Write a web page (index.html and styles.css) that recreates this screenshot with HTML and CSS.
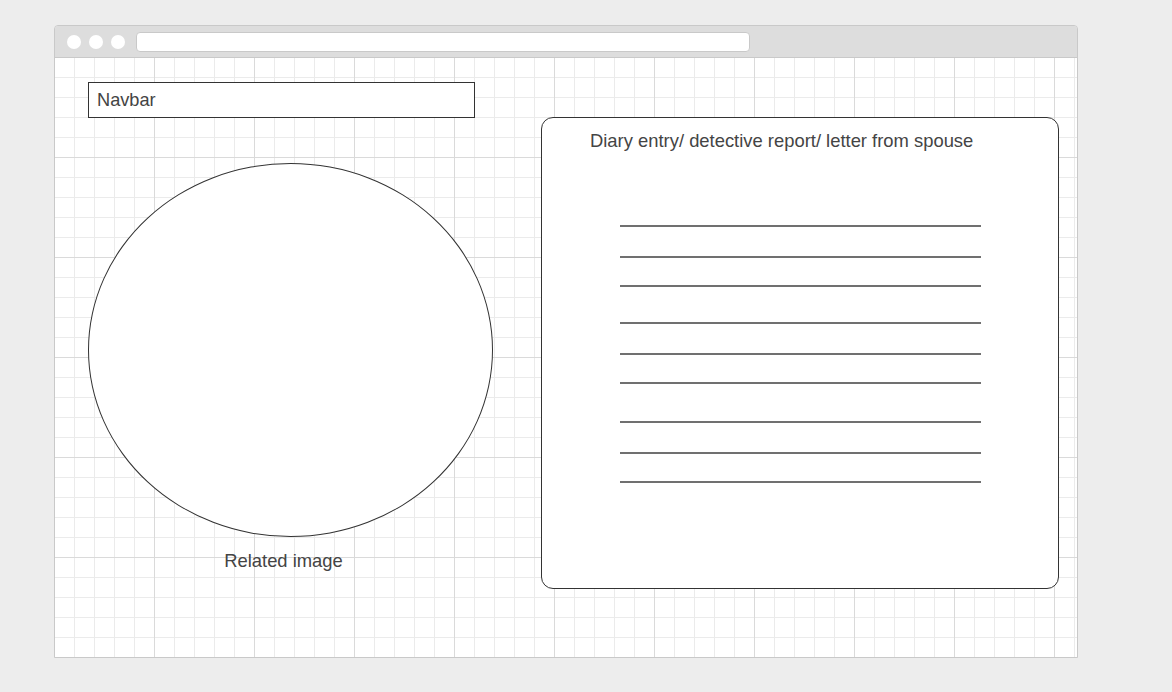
FILE: index.html
```html
<!DOCTYPE html>
<html>
<head>
<meta charset="utf-8">
<title>Wireframe</title>
<link rel="stylesheet" href="styles.css">
</head>
<body>
<div class="window">
  <div class="window-header">
    <span class="dot"></span>
    <span class="dot"></span>
    <span class="dot"></span>
    <div class="url-bar"></div>
  </div>
  <div class="window-content">
    <div class="left-col">
      <div class="navbar">Navbar</div>
      <div class="image-circle"></div>
      <div class="caption">Related image</div>
    </div>
    <div class="card">
      <div class="card-title">Diary entry/ detective report/ letter from spouse</div>
      <div class="lines">
        <div class="line-group">
          <div class="line"></div>
          <div class="line"></div>
          <div class="line"></div>
        </div>
        <div class="line-group">
          <div class="line"></div>
          <div class="line"></div>
          <div class="line"></div>
        </div>
        <div class="line-group">
          <div class="line"></div>
          <div class="line"></div>
          <div class="line"></div>
        </div>
      </div>
    </div>
  </div>
</div>
</body>
</html>
```

FILE: styles.css
```css
html, body {
  margin: 0;
  padding: 0;
}
body {
  background: #ededed;
  font-family: "Liberation Sans", Arial, sans-serif;
  color: #444444;
  padding: 25px 0 0 54px;
  height: 692px;
  box-sizing: border-box;
  overflow: hidden;
}
.window {
  width: 1024px;
  height: 633px;
  box-sizing: border-box;
  border: 1px solid #c9c9c9;
  border-radius: 4px 4px 0 0;
  display: flex;
  flex-direction: column;
  overflow: hidden;
}
.window-header {
  height: 32px;
  box-sizing: border-box;
  background: #dddddd;
  border-bottom: 1px solid #c9c9c9;
  display: flex;
  align-items: center;
  padding-left: 12px;
  gap: 8px;
}
.dot {
  width: 14px;
  height: 14px;
  border-radius: 50%;
  background: #ffffff;
  flex: none;
}
.url-bar {
  margin-left: 3px;
  width: 614px;
  height: 20px;
  box-sizing: border-box;
  background: #ffffff;
  border: 1px solid #c9c9c9;
  border-radius: 4px;
}
.window-content {
  flex: 1;
  display: flex;
  align-items: flex-start;
  padding: 24px 0 0 33px;
  background-color: #ffffff;
  background-image:
    linear-gradient(to right, transparent 99px, #dadada 99px, #dadada 100px),
    linear-gradient(to bottom, transparent 99px, #dadada 99px, #dadada 100px),
    linear-gradient(to right, transparent 19px, #ebebeb 19px, #ebebeb 20px),
    linear-gradient(to bottom, transparent 19px, #ebebeb 19px, #ebebeb 20px);
  background-size: 100px 100px, 100px 100px, 20px 20px, 20px 20px;
}
.left-col {
  width: 405px;
  display: flex;
  flex-direction: column;
  flex: none;
}
.navbar {
  width: 387px;
  height: 36px;
  box-sizing: border-box;
  border: 1px solid #333333;
  background: #ffffff;
  font-size: 18.2px;
  line-height: 34px;
  padding-left: 8px;
}
.image-circle {
  margin-top: 45px;
  width: 405px;
  height: 374px;
  box-sizing: border-box;
  border: 1px solid #333333;
  border-radius: 50%;
  background: #ffffff;
}
.caption {
  margin-top: 13px;
  font-size: 18.4px;
  line-height: 22px;
  text-align: center;
  padding-right: 14px;
}
.card {
  margin: 35px 0 0 48px;
  width: 518px;
  height: 472px;
  box-sizing: border-box;
  border: 1px solid #333333;
  border-radius: 12px;
  background: #ffffff;
  padding: 12px 0 0 48px;
  flex: none;
}
.card-title {
  font-size: 18.4px;
  line-height: 22px;
}
.lines {
  margin: 73px 0 0 30px;
  width: 361px;
  display: flex;
  flex-direction: column;
}
.line-group {
  display: flex;
  flex-direction: column;
}
.line-group + .line-group {
  margin-top: 35px;
}
.line-group:last-child {
  margin-top: 37px;
}
.line {
  height: 2px;
  background: #707070;
}
.line:nth-child(2) {
  margin-top: 29px;
}
.line:nth-child(3) {
  margin-top: 27px;
}
```
